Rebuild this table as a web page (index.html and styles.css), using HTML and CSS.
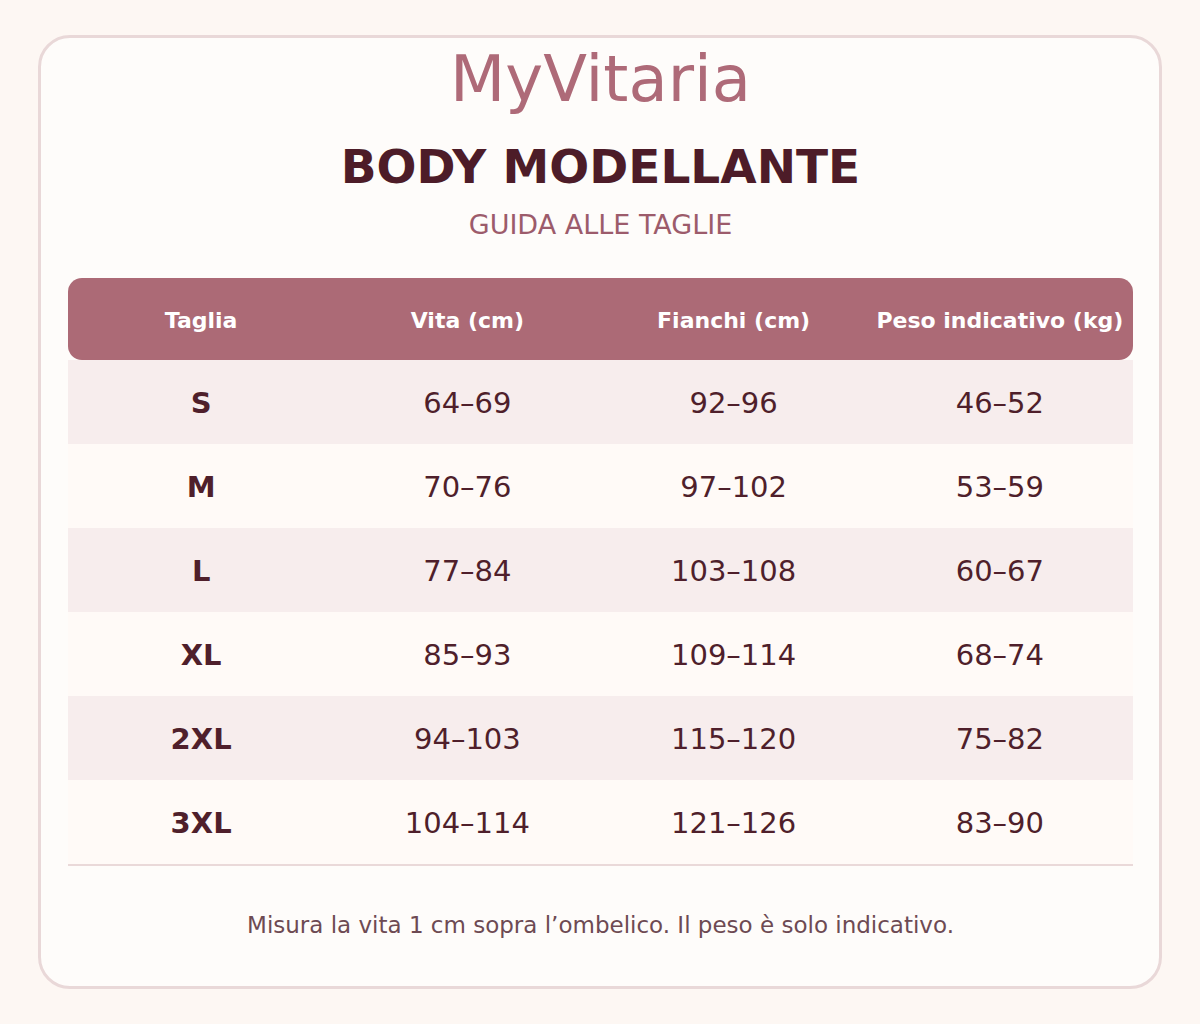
FILE: index.html
```html
<!DOCTYPE html>
<html lang="it">
<head>
<meta charset="utf-8">
<title>MyVitaria – Body Modellante</title>
<link rel="stylesheet" href="styles.css">
</head>
<body>
<main class="card">
  <div class="brand">MyVitaria</div>
  <h1 class="title">BODY MODELLANTE</h1>
  <div class="subtitle">GUIDA ALLE TAGLIE</div>
  <table class="sizes">
    <thead>
      <tr>
        <th>Taglia</th>
        <th>Vita (cm)</th>
        <th>Fianchi (cm)</th>
        <th>Peso indicativo (kg)</th>
      </tr>
    </thead>
    <tbody>
      <tr><td class="size">S</td><td>64–69</td><td>92–96</td><td>46–52</td></tr>
      <tr><td class="size">M</td><td>70–76</td><td>97–102</td><td>53–59</td></tr>
      <tr><td class="size">L</td><td>77–84</td><td>103–108</td><td>60–67</td></tr>
      <tr><td class="size">XL</td><td>85–93</td><td>109–114</td><td>68–74</td></tr>
      <tr><td class="size">2XL</td><td>94–103</td><td>115–120</td><td>75–82</td></tr>
      <tr><td class="size">3XL</td><td>104–114</td><td>121–126</td><td>83–90</td></tr>
    </tbody>
  </table>
  <p class="note">Misura la vita 1 cm sopra l’ombelico. Il peso è solo indicativo.</p>
</main>
</body>
</html>
```

FILE: styles.css
```css
html, body {
  margin: 0;
  padding: 0;
  background: #fdf7f3;
  font-family: "DejaVu Sans", "Liberation Sans", sans-serif;
}

.card {
  box-sizing: border-box;
  width: 1124px;
  height: 954px;
  margin: 35px 0 0 38px;
  padding: 4px 26px 0 27px;
  background: #fefcfa;
  border: 3px solid #e9d8d8;
  border-radius: 32px;
  text-align: center;
}

.brand {
  font-size: 64px;
  line-height: 74px;
  color: #ae6a78;
}

.title {
  margin: 24px 0 0;
  font-size: 47px;
  line-height: 54px;
  font-weight: bold;
  color: #4d1c28;
}

.subtitle {
  margin-top: 16px;
  font-size: 27px;
  line-height: 30px;
  color: #9c5b6b;
}

.sizes {
  width: 1065px;
  margin-top: 38px;
  border-collapse: separate;
  border-spacing: 0;
  table-layout: fixed;
  border-bottom: 2px solid #ead9d9;
}

.sizes th {
  box-sizing: border-box;
  height: 82px;
  padding: 2px 0 0;
  background: #ac6a76;
  color: #ffffff;
  font-size: 22px;
  font-weight: bold;
}

.sizes th:first-child {
  border-radius: 14px 0 0 14px;
}

.sizes th:last-child {
  border-radius: 0 14px 14px 0;
}

.sizes td {
  box-sizing: border-box;
  height: 84px;
  padding: 1px 0 0;
  font-size: 29px;
  color: #4f1f2b;
  background: #fffaf7;
}

.sizes tbody tr:nth-child(odd) td {
  background: #f7eded;
}

.sizes td.size {
  font-weight: bold;
}

.note {
  margin: 46px 0 0;
  font-size: 23px;
  line-height: 26px;
  color: #6d4a53;
}
```
